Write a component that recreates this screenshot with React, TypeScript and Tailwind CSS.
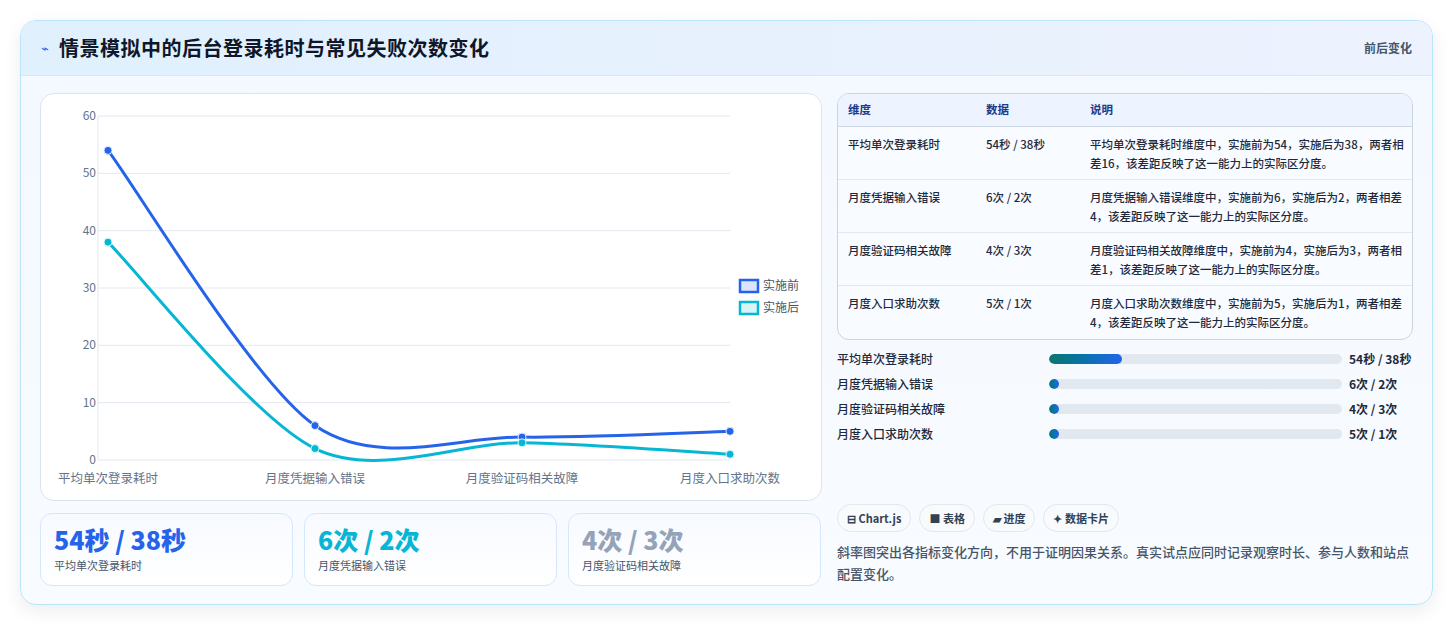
import React from 'react';

const F = { fontFamily: '"Noto Sans CJK SC", "Noto Sans", sans-serif' };

const labels = ['平均单次登录耗时', '月度凭据输入错误', '月度验证码相关故障', '月度入口求助次数'];
const before = [54, 6, 4, 5];
const after = [38, 2, 3, 1];
const xs = [67, 274, 481, 689];
const yOf = (v: number) => 366 - v * (344 / 60);

// smooth path, catmull-rom style like chart.js tension
const smooth = (vals: number[]) => {
    const p = vals.map((v, i) => [xs[i], yOf(v)]);
    let d = `M${p[0][0]},${p[0][1]}`;
    const t = 0.3;
    for (let i = 0; i < p.length - 1; i++) {
        const p0 = p[i - 1] || p[i];
        const p1 = p[i];
        const p2 = p[i + 1];
        const p3 = p[i + 2] || p2;
        const c1 = [p1[0] + (p2[0] - p0[0]) * t / 2, p1[1] + (p2[1] - p0[1]) * t / 2];
        const c2 = [p2[0] - (p3[0] - p1[0]) * t / 2, p2[1] - (p3[1] - p1[1]) * t / 2];
        d += ` C${c1[0]},${c1[1]} ${c2[0]},${c2[1]} ${p2[0]},${p2[1]}`;
    }
    return d;
};

const Chart = () => (
    <svg width="781" height="407" style={F}>
        {[0, 10, 20, 30, 40, 50, 60].map(v => (
            <g key={v}>
                <line x1={57} x2={689} y1={yOf(v)} y2={yOf(v)} stroke="#e2e8f0" />
                <text x={55} y={yOf(v) + 4} textAnchor="end" fontSize="12" fill="#64748b">{v}</text>
            </g>
        ))}
        <line x1={57} x2={57} y1={22} y2={366} stroke="#e2e8f0" />
        {labels.map((l, i) => (
            <text key={l} x={xs[i]} y={389} textAnchor="middle" fontSize="12.5" fill="#64748b">{l}</text>
        ))}
        <path d={smooth(before)} fill="none" stroke="#2563eb" strokeWidth="3" />
        <path d={smooth(after)} fill="none" stroke="#06b6d4" strokeWidth="3" />
        {before.map((v, i) => <circle key={i} cx={xs[i]} cy={yOf(v)} r="4" fill="#2563eb" stroke="#dbeafe" strokeWidth="1" />)}
        {after.map((v, i) => <circle key={i} cx={xs[i]} cy={yOf(v)} r="4" fill="#06b6d4" stroke="#cffafe" strokeWidth="1" />)}
        <rect x={699} y={186} width={18} height={12} fill="#dbe4fb" stroke="#2563eb" strokeWidth="2.5" />
        <text x={722} y={196} fontSize="12" fill="#475569">实施前</text>
        <rect x={699} y={208} width={18} height={12} fill="#d8f4f9" stroke="#06b6d4" strokeWidth="2.5" />
        <text x={722} y={218} fontSize="12" fill="#475569">实施后</text>
    </svg>
);

const rows = [
    ['平均单次登录耗时', '54秒 / 38秒', '平均单次登录耗时维度中，实施前为54，实施后为38，两者相差16，该差距反映了这一能力上的实际区分度。'],
    ['月度凭据输入错误', '6次 / 2次', '月度凭据输入错误维度中，实施前为6，实施后为2，两者相差4，该差距反映了这一能力上的实际区分度。'],
    ['月度验证码相关故障', '4次 / 3次', '月度验证码相关故障维度中，实施前为4，实施后为3，两者相差1，该差距反映了这一能力上的实际区分度。'],
    ['月度入口求助次数', '5次 / 1次', '月度入口求助次数维度中，实施前为5，实施后为1，两者相差4，该差距反映了这一能力上的实际区分度。'],
];

const bars = [
    ['平均单次登录耗时', 25, '54秒 / 38秒'],
    ['月度凭据输入错误', 0, '6次 / 2次'],
    ['月度验证码相关故障', 0, '4次 / 3次'],
    ['月度入口求助次数', 0, '5次 / 1次'],
] as const;

const stats = [
    ['54秒 / 38秒', '平均单次登录耗时', 'text-[#2563eb]'],
    ['6次 / 2次', '月度凭据输入错误', 'text-[#06b6d4]'],
    ['4次 / 3次', '月度验证码相关故障', 'text-[#94a3b8]'],
];

export default function App() {
    return (
        <div className="w-[1453px] h-[626px] bg-white pt-[20px] px-[20px]" style={F}>
            <div className="w-[1413px] h-[585px] rounded-[16px] border border-[#bae6fd] bg-gradient-to-b from-[#f4f9ff] to-[#f8fbff] overflow-hidden shadow-[0_6px_18px_rgba(15,23,42,0.08)]">
                <div className="h-[55px] flex items-center justify-between px-[20px] bg-gradient-to-r from-[#e0f0fd] to-[#edf2fe] border-b border-[#dbe7f5]">
                    <div className="flex items-center gap-[10px]">
                        <span className="text-[#2563eb] text-[13px]">⌁</span>
                        <span className="text-[20px] font-bold text-[#0f172a] tracking-[0.5px]">情景模拟中的后台登录耗时与常见失败次数变化</span>
                    </div>
                    <span className="text-[12px] font-bold text-[#475569]">前后变化</span>
                </div>
                <div className="flex gap-[15px] px-[19px] pt-[17px]">
                    <div className="w-[782px] flex flex-col gap-[12px]">
                        <div className="h-[408px] rounded-[14px] border border-[#dbe4ee] bg-white overflow-hidden">
                            <Chart />
                        </div>
                        <div className="flex gap-[11px]">
                            {stats.map(([v, l, c]) => (
                                <div key={l} className="w-[253px] h-[73px] rounded-[12px] border border-[#d7e7fb] bg-gradient-to-b from-[#f7faff] to-white px-[13px] pt-[9px]">
                                    <div className={`text-[25px] leading-[32px] font-black ${c}`}>{v}</div>
                                    <div className="text-[11px] text-[#475569] mt-[2px]">{l}</div>
                                </div>
                            ))}
                        </div>
                    </div>
                    <div className="w-[578px] h-[492px] flex flex-col">
                        <div className="rounded-[12px] border border-[#cbd5e1] overflow-hidden bg-[#f8fbff]">
                            <div className="flex h-[33px] items-center bg-[#edf4ff] border-b border-[#cbd5e1] text-[11.5px] font-bold text-[#1e3a8a]">
                                <div className="w-[148px] pl-[10px]">维度</div>
                                <div className="w-[104px]">数据</div>
                                <div className="flex-1">说明</div>
                            </div>
                            {rows.map(([a, b, c], i) => (
                                <div key={a} className={`flex h-[53px] pt-[8px] text-[11.5px] font-medium text-[#1e293b] leading-[19px] ${i < 3 ? 'border-b border-[#e2e8f0]' : ''}`}>
                                    <div className="w-[148px] pl-[10px]">{a}</div>
                                    <div className="w-[104px]">{b}</div>
                                    <div className="flex-1 pr-[8px]">{c}</div>
                                </div>
                            ))}
                        </div>
                        <div className="mt-[10px] flex flex-col gap-[8px]">
                            {bars.map(([l, w, v]) => (
                                <div key={l} className="flex items-center h-[17px] text-[12px] font-medium">
                                    <div className="w-[212px] text-[#1e293b]">{l}</div>
                                    <div className="w-[293px] h-[10px] rounded-full bg-[#e2e8f0] overflow-hidden">
                                        <div className="h-full rounded-full bg-gradient-to-r from-[#0f766e] to-[#2563eb]" style={{ width: w ? `${w}%` : '10px' }} />
                                    </div>
                                    <div className="ml-[7px] font-bold text-[#1e293b]">{v}</div>
                                </div>
                            ))}
                        </div>
                        <div className="mt-auto">
                            <div className="flex gap-[8px] text-[11px] font-bold text-[#334155]">
                                {['⊟ Chart.js', '■ 表格', '▰ 进度', '✦ 数据卡片'].map(t => (
                                    <span key={t} className="h-[28px] px-[9px] flex items-center rounded-full border border-[#e2e8f0] bg-[#f8fafc]">{t}</span>
                                ))}
                            </div>
                            <p className="mt-[9px] text-[13px] leading-[22px] font-medium text-[#475569]">斜率图突出各指标变化方向，不用于证明因果关系。真实试点应同时记录观察时长、参与人数和站点配置变化。</p>
                        </div>
                    </div>
                </div>
            </div>
        </div>
    );
}
